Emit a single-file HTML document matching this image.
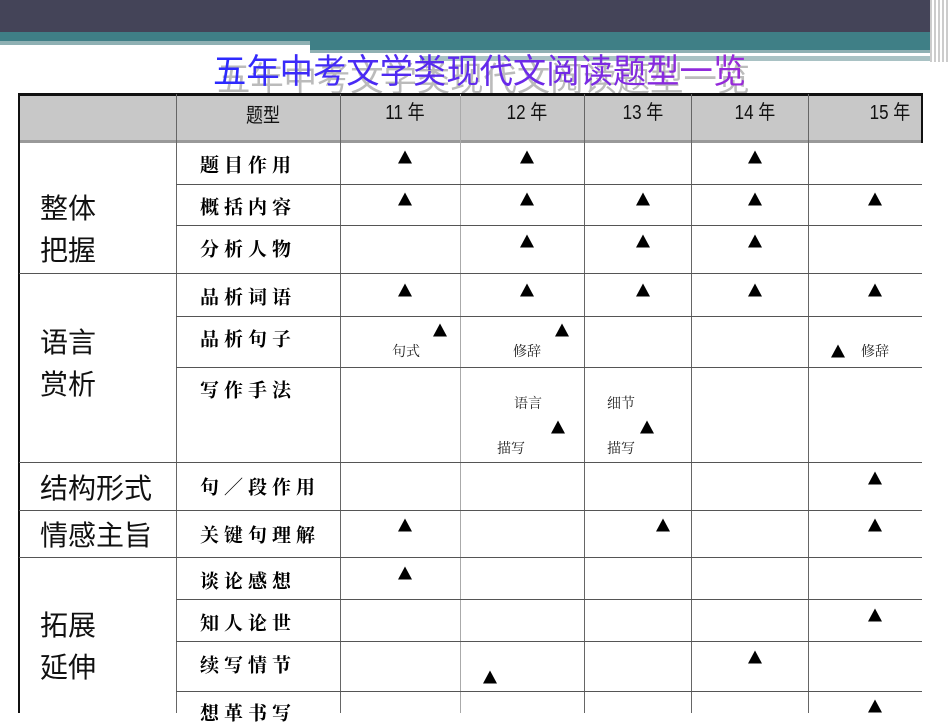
<!DOCTYPE html><html><head><meta charset="utf-8"><style>
body{margin:0;width:950px;height:713px;overflow:hidden;background:#fff;position:relative;font-family:"Liberation Sans","Noto Sans CJK SC",sans-serif}
div{position:absolute}
.h{height:1px;background:#555}.v{width:1px;background:#666}
.t{width:0;height:0;border-left:7px solid transparent;border-right:7px solid transparent;border-bottom:13px solid #000;transform:translate(-50%,-50%)}
.s{font-size:14px;transform:translate(-50%,-50%);line-height:1;color:#222;font-family:"Noto Serif CJK SC",serif}
.r{left:200px;font-size:19px;font-weight:bold;letter-spacing:5px;font-family:"Noto Serif CJK SC",serif;transform:translateY(-50%);line-height:1}
.g{left:40px;font-size:28px;line-height:42px;color:#111}
.hd{font-size:20px;transform:translate(-50%,-50%) scaleX(0.85);line-height:1;color:#111}
</style></head><body>
<div style="left:0;top:0;width:950px;height:32px;background:#444458"></div>
<div style="left:0;top:32px;width:950px;height:9px;background:#3f7f86"></div>
<div style="left:0;top:41px;width:310px;height:4px;background:#8fb0b3"></div>
<div style="left:310px;top:41px;width:640px;height:9px;background:#3f7f86"></div>
<div style="left:310px;top:50px;width:640px;height:3px;background:#8fb0b3"></div>
<div style="left:420px;top:56px;width:530px;height:5px;background:#a9c2c4"></div>
<div style="left:930px;top:0;width:20px;height:62px;background:repeating-linear-gradient(90deg,#ccc 0 2px,#fff 2px 4px)"></div>
<div style="left:213px;top:52px;font-size:34px;line-height:40px;color:#bbb;transform-origin:0 0;transform:translate(4px,8px) scaleX(0.98)">五年中考文学类现代文阅读题型一览</div>
<div style="left:213px;top:52px;font-size:34px;line-height:40px;transform-origin:0 0;transform:scaleX(0.98);background:linear-gradient(90deg,#2a2aff,#9a2ad8);-webkit-background-clip:text;color:transparent">五年中考文学类现代文阅读题型一览</div>
<div style="left:19px;top:94px;width:903px;height:48px;background:#c8c8c8"></div>
<div style="left:18px;top:93px;width:905px;height:3px;background:#111"></div>
<div style="left:18px;top:140px;width:905px;height:3px;background:#999"></div>
<div style="left:18px;top:93px;width:2px;height:620px;background:#111"></div>
<div style="left:921px;top:93px;width:2px;height:50px;background:#111"></div>
<div class="v" style="left:176px;top:94px;height:619px"></div>
<div class="v" style="left:340px;top:94px;height:619px"></div>
<div class="v" style="left:460px;top:94px;height:619px;background:#aaa"></div>
<div class="v" style="left:584px;top:94px;height:619px"></div>
<div class="v" style="left:691px;top:94px;height:619px"></div>
<div class="v" style="left:808px;top:94px;height:619px"></div>
<div class="h" style="left:176px;top:184px;width:746px"></div>
<div class="h" style="left:176px;top:225px;width:746px"></div>
<div class="h" style="left:19px;top:273px;width:903px"></div>
<div class="h" style="left:176px;top:316px;width:746px"></div>
<div class="h" style="left:176px;top:367px;width:746px"></div>
<div class="h" style="left:19px;top:462px;width:903px"></div>
<div class="h" style="left:19px;top:510px;width:903px"></div>
<div class="h" style="left:19px;top:557px;width:903px"></div>
<div class="h" style="left:176px;top:599px;width:746px"></div>
<div class="h" style="left:176px;top:641px;width:746px"></div>
<div class="h" style="left:176px;top:691px;width:746px"></div>
<div class="hd" style="left:263px;top:116px">题型</div>
<div class="hd" style="left:405px;top:113px">11 年</div>
<div class="hd" style="left:527px;top:113px">12 年</div>
<div class="hd" style="left:643px;top:113px">13 年</div>
<div class="hd" style="left:755px;top:113px">14 年</div>
<div class="hd" style="left:890px;top:113px">15 年</div>
<div class="g" style="top:188px">整体<br>把握</div>
<div class="g" style="top:322px">语言<br>赏析</div>
<div class="g" style="top:468px">结构形式</div>
<div class="g" style="top:515px">情感主旨</div>
<div class="g" style="top:605px">拓展<br>延伸</div>
<div class="r" style="top:164px">题目作用</div>
<div class="r" style="top:206px">概括内容</div>
<div class="r" style="top:248px">分析人物</div>
<div class="r" style="top:296px">品析词语</div>
<div class="r" style="top:338px">品析句子</div>
<div class="r" style="top:389px">写作手法</div>
<div class="r" style="top:486px">句／段作用</div>
<div class="r" style="top:534px">关键句理解</div>
<div class="r" style="top:580px">谈论感想</div>
<div class="r" style="top:622px">知人论世</div>
<div class="r" style="top:664px">续写情节</div>
<div class="r" style="top:712px">想革书写</div>
<div class="t" style="left:405px;top:157px"></div><div class="t" style="left:527px;top:157px"></div><div class="t" style="left:755px;top:157px"></div>
<div class="t" style="left:405px;top:199px"></div><div class="t" style="left:527px;top:199px"></div><div class="t" style="left:643px;top:199px"></div><div class="t" style="left:755px;top:199px"></div><div class="t" style="left:875px;top:199px"></div>
<div class="t" style="left:527px;top:241px"></div><div class="t" style="left:643px;top:241px"></div><div class="t" style="left:755px;top:241px"></div>
<div class="t" style="left:405px;top:290px"></div><div class="t" style="left:527px;top:290px"></div><div class="t" style="left:643px;top:290px"></div><div class="t" style="left:755px;top:290px"></div><div class="t" style="left:875px;top:290px"></div>
<div class="t" style="left:440px;top:330px"></div><div class="t" style="left:562px;top:330px"></div><div class="t" style="left:838px;top:351px"></div>
<div class="t" style="left:558px;top:427px"></div><div class="t" style="left:647px;top:427px"></div>
<div class="t" style="left:875px;top:478px"></div>
<div class="t" style="left:405px;top:525px"></div><div class="t" style="left:663px;top:525px"></div><div class="t" style="left:875px;top:525px"></div>
<div class="t" style="left:405px;top:573px"></div>
<div class="t" style="left:875px;top:615px"></div>
<div class="t" style="left:755px;top:657px"></div><div class="t" style="left:490px;top:677px"></div>
<div class="t" style="left:875px;top:706px"></div>
<div class="s" style="left:406px;top:351px">句式</div>
<div class="s" style="left:527px;top:351px">修辞</div>
<div class="s" style="left:875px;top:351px">修辞</div>
<div class="s" style="left:528px;top:403px">语言</div>
<div class="s" style="left:621px;top:403px">细节</div>
<div class="s" style="left:511px;top:448px">描写</div>
<div class="s" style="left:621px;top:448px">描写</div>
</body></html>
